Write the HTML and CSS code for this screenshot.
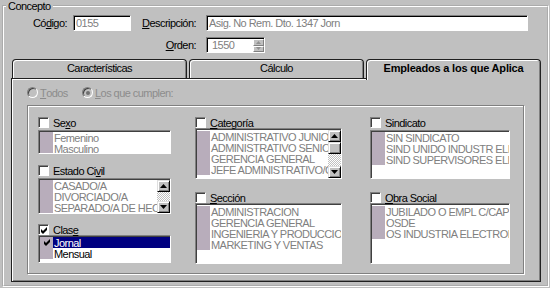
FILE: index.html
```html
<!DOCTYPE html>
<html lang="es">
<head>
    <meta charset="UTF-8">
    <title>Concepto</title>
    <link rel="stylesheet" href="styles.css">
</head>
<body>
    <fieldset class="concepto">
        <legend>Concepto</legend>

        <div class="row row-top">
            <label class="lbl lbl-codigo">Có<u>d</u>igo:</label>
            <div class="field field-codigo">0155</div>
            <label class="lbl lbl-desc"><u>D</u>escripción:</label>
            <div class="field field-desc">Asig. No Rem. Dto. 1347 Jorn</div>
        </div>

        <div class="row row-orden">
            <label class="lbl lbl-orden"><u>O</u>rden:</label>
            <div class="field field-orden">
                <span class="field-text">1550</span>
                <span class="spin">
                    <span class="spin-btn"><svg width="5" height="3"><polygon points="2.5,0 5,3 0,3"/></svg></span>
                    <span class="spin-btn"><svg width="5" height="3"><polygon points="0,0 5,0 2.5,3"/></svg></span>
                </span>
            </div>
        </div>

        <div class="tabs">
            <div class="tab">Características</div>
            <div class="tab">Cálculo</div>
            <div class="tab active">Empleados a los que Aplica</div>
        </div>

        <div class="panel">
            <div class="radios">
                <span class="radio-item radio-todos"><span class="radio"></span><u>T</u>odos</span>
                <span class="radio-item"><span class="radio checked"></span><u>L</u>os que cumplen:</span>
            </div>

            <div class="group">
                <!-- columna 1 -->
                <div class="col col1">
                    <div class="chk-row"><span class="chk"></span>Se<u>x</u>o</div>
                    <div class="list l-sexo">
                        <ul>
                            <li>Femenino</li>
                            <li>Masculino</li>
                        </ul>
                    </div>

                    <div class="chk-row r-estado"><span class="chk"></span>Estado Ci<u>v</u>il</div>
                    <div class="list l-estado">
                        <ul>
                            <li>CASADO/A</li>
                            <li>DIVORCIADO/A</li>
                            <li>SEPARADO/A DE HECHO</li>
                        </ul>
                        <div class="sb">
                            <span class="sb-btn"><svg width="7" height="4"><polygon points="3.5,0 7,4 0,4"/></svg></span>
                            <span class="sb-track"></span>
                            <span class="sb-btn"><svg width="7" height="4"><polygon points="0,0 7,0 3.5,4"/></svg></span>
                        </div>
                    </div>

                    <div class="chk-row r-clase">
                        <span class="chk"><svg width="7" height="7"><polygon points="0,2 2,4 6,0 6,3 2,7 0,5"/></svg></span>Clas<u>e</u>
                    </div>
                    <div class="list l-clase enabled">
                        <ul>
                            <li class="sel"><svg class="tick" width="7" height="7"><polygon points="0,2 2,4 6,0 6,3 2,7 0,5"/></svg>Jornal</li>
                            <li>Mensual</li>
                        </ul>
                    </div>
                </div>

                <!-- columna 2 -->
                <div class="col col2">
                    <div class="chk-row"><span class="chk"></span><u>C</u>ategoría</div>
                    <div class="list l-categoria">
                        <ul>
                            <li>ADMINISTRATIVO JUNIOR</li>
                            <li>ADMINISTRATIVO SENIOR</li>
                            <li>GERENCIA GENERAL</li>
                            <li>JEFE ADMINISTRATIVO/CONTABLE</li>
                        </ul>
                        <div class="sb">
                            <span class="sb-btn"><svg width="7" height="4"><polygon points="3.5,0 7,4 0,4"/></svg></span>
                            <span class="sb-btn sb-thumb"></span>
                            <span class="sb-track"></span>
                            <span class="sb-btn"><svg width="7" height="4"><polygon points="0,0 7,0 3.5,4"/></svg></span>
                        </div>
                    </div>

                    <div class="chk-row r-lower"><span class="chk"></span><u>S</u>ección</div>
                    <div class="list l-lower">
                        <ul>
                            <li>ADMINISTRACION</li>
                            <li>GERENCIA GENERAL</li>
                            <li>INGENIERIA Y PRODUCCION</li>
                            <li>MARKETING Y VENTAS</li>
                        </ul>
                    </div>
                </div>

                <!-- columna 3 -->
                <div class="col col3">
                    <div class="chk-row"><span class="chk"></span>Sindicato</div>
                    <div class="list l-sindicato">
                        <ul>
                            <li>SIN SINDICATO</li>
                            <li>SIND UNIDO INDUSTR ELECTR</li>
                            <li>SIND SUPERVISORES ELECTR</li>
                        </ul>
                    </div>

                    <div class="chk-row r-lower"><span class="chk"></span><u>O</u>bra Social</div>
                    <div class="list l-lower">
                        <ul>
                            <li>JUBILADO O EMPL C/CAP</li>
                            <li>OSDE</li>
                            <li>OS INDUSTRIA ELECTRONICA</li>
                        </ul>
                    </div>
                </div>
            </div>
        </div>
    </fieldset>
</body>
</html>
```

FILE: styles.css
```css
* {
    box-sizing: border-box;
}

body {
    margin: 0;
    background-color: #c0c0c0;
    font-family: "Liberation Sans", Arial, sans-serif;
    font-size: 11px;
    letter-spacing: -0.55px;
    line-height: 12px;
    color: #000;
}

u {
    text-decoration: underline;
}

/* marco Concepto */
.concepto {
    margin: 0 0 0 2px;
    padding: 0;
    width: 547px;
    height: 287px;
    min-width: 0;
    border: 2px groove #fff;
}

.concepto legend {
    margin-left: 2px;
    padding: 0 2px;
    height: 12px;
    line-height: 12px;
}

/* campos de cabecera */
.row {
    display: flex;
    align-items: center;
    height: 16px;
}

.row-top {
    margin-top: 3px;
}

.row-orden {
    margin-top: 6px;
}

.lbl {
    text-align: right;
}

.lbl-codigo {
    width: 69px;
    padding-right: 6px;
}

.lbl-desc {
    width: 75px;
    padding-right: 10px;
}

.lbl-orden {
    width: 202px;
    padding-right: 10px;
}

.field {
    height: 16px;
    background-color: #fff;
    color: #808080;
    border: 1px solid;
    border-color: #808080 #fff #fff #808080;
    box-shadow: inset 1px 1px 0 #000;
    padding-left: 2px;
    line-height: 14px;
    white-space: nowrap;
}

.field-codigo {
    width: 58px;
}

.field-desc {
    width: 322px;
}

.field-orden {
    width: 59px;
    display: flex;
    padding-left: 5px;
}

.field-text {
    flex: 1;
}

.spin {
    width: 11px;
    display: flex;
    flex-direction: column;
    margin-top: 1px;
}

.spin-btn {
    height: 7px;
    background-color: #c0c0c0;
    border: 1px solid;
    border-color: #fff #808080 #808080 #fff;
    display: flex;
    align-items: center;
    justify-content: center;
}

.spin-btn svg {
    fill: #909090;
}

/* pestañas */
.tabs {
    display: flex;
    align-items: flex-start;
    gap: 2px;
    height: 19px;
    margin: 6px 0 0 8px;
}

.tab {
    width: 175px;
    height: 19px;
    border: 1px solid #202020;
    border-bottom: 0;
    border-radius: 4px 4px 0 0;
    box-shadow: inset 1px 1px 0 #fff, inset -1px 0 0 #808080;
    text-align: center;
    line-height: 17px;
}

.tab.active {
    position: relative;
    z-index: 1;
    height: 21px;
    margin-bottom: -2px;
    background-color: #c0c0c0;
    font-weight: bold;
    letter-spacing: -0.2px;
}

.panel {
    margin-left: 7px;
    width: 530px;
    height: 204px;
    border: 1px solid #202020;
    box-shadow: inset 1px 1px 0 #fff, inset -1px -1px 0 #808080;
    padding: 8px 0 0 15px;
}

/* radios */
.radios {
    display: flex;
    align-items: center;
    height: 11px;
}

.radio-item {
    display: flex;
    align-items: center;
    color: #8c8c8c;
}

.radio-todos {
    width: 55px;
}

.radio {
    width: 11px;
    height: 11px;
    margin-right: 2px;
    border-radius: 50%;
    border: 1px solid;
    border-color: #808080 #fff #fff #808080;
    box-shadow: inset 1px 1px 0 #404040;
    background-color: #c0c0c0;
    display: flex;
    align-items: center;
    justify-content: center;
}

.radio.checked::after {
    content: "";
    width: 4px;
    height: 4px;
    border-radius: 50%;
    background-color: #707070;
}

/* grupo de filtros */
.group {
    margin-top: 7px;
    width: 497px;
    height: 169px;
    border: 1px solid #808080;
    box-shadow: inset 1px 1px 0 #fff, 1px 1px 0 #fff;
    display: flex;
    align-items: flex-start;
    padding: 11px 0 0 10px;
}

.col1 {
    width: 133px;
}

.col2 {
    width: 147px;
    margin-left: 24px;
}

.col3 {
    width: 140px;
    margin-left: 28px;
}

.chk-row {
    display: flex;
    align-items: center;
    height: 11px;
    white-space: nowrap;
}

.chk {
    flex: none;
    width: 11px;
    height: 11px;
    margin-right: 4px;
    border: 1px solid;
    border-color: #808080 #fff #fff #808080;
    box-shadow: inset 1px 1px 0 #404040;
    background-color: #fff;
    display: flex;
    align-items: center;
    justify-content: center;
    padding: 1px 0 0 1px;
}

.r-estado {
    margin-top: 11px;
}

.r-clase {
    margin-top: 10px;
}

.r-lower {
    margin-top: 13px;
}

/* listas */
.list {
    display: flex;
    overflow: hidden;
    border: 1px solid;
    border-color: #808080 #fff #fff #808080;
    box-shadow: inset 1px 1px 0 #404040;
    background-color: #fff;
}

.list ul {
    flex: 1;
    min-width: 0;
    margin: 0;
    padding: 1px 0 0 1px;
    list-style: none;
    overflow: hidden;
}

.list li {
    height: 11px;
    line-height: 12px;
    padding-left: 14px;
    white-space: nowrap;
    color: #808080;
    background: linear-gradient(to right, #b8adbb 13px, transparent 13px);
}

.list.enabled li {
    color: #000;
}

.list li.sel {
    color: #fff;
    background: linear-gradient(to right, #b8adbb 13px, #000080 13px);
    position: relative;
}

.tick {
    position: absolute;
    left: 4px;
    top: 2px;
}

.l-sexo {
    margin-top: 2px;
    height: 24px;
}

.l-estado {
    margin-top: 2px;
    height: 36px;
}

.l-clase {
    margin-top: 0;
    height: 28px;
}

.l-categoria {
    margin-top: 0;
    height: 51px;
}

.l-categoria ul {
    padding-top: 2px;
}

.l-sindicato {
    margin-top: 2px;
    height: 49px;
}

.l-lower {
    margin-top: 0;
    height: 61px;
}

.l-lower ul {
    padding-top: 2px;
}

/* barra de desplazamiento */
.sb {
    flex: none;
    width: 13px;
    margin-top: 1px;
    display: flex;
    flex-direction: column;
}

.sb-btn {
    flex: none;
    height: 12px;
    background-color: #c0c0c0;
    border: 1px solid;
    border-color: #dfdfdf #000 #000 #dfdfdf;
    box-shadow: inset 1px 1px 0 #fff, inset -1px -1px 0 #808080;
    display: flex;
    align-items: center;
    justify-content: center;
}

.sb-track {
    flex: 1;
    background-color: #fff;
    background-image: conic-gradient(#c0c0c0 0 25%, transparent 0 50%, #c0c0c0 0 75%, transparent 0);
    background-size: 2px 2px;
}
```
